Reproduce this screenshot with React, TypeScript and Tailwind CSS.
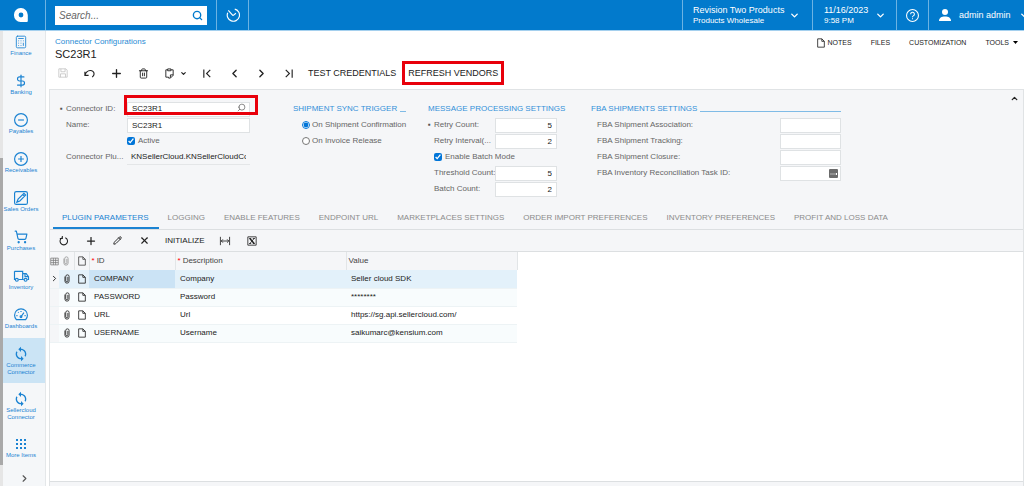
import { useState, ReactNode } from "react";
import { ChevronDown, ChevronLeft, ChevronRight, ChevronUp, Plus, Trash2, Search, Pencil, X, ShoppingCart, DollarSign, Calculator } from "lucide-react";
import { MdSync } from "react-icons/md";

const Svg = (props: { className?: string; width?: number; children: ReactNode }) => (
	<svg viewBox="0 0 24 24" fill="none" stroke="currentColor" strokeWidth={props.width ?? 2} className={props.className} aria-hidden="true">
		{props.children}
	</svg>
);

const Logo = () => (
	<svg viewBox="0 0 14 14" className="size-[14px]" aria-hidden="true">
		<path fill="#fff" fillRule="evenodd" d="M6.500 0A6.500 6.500 0 0 0 0 6.500V7.500A6.500 6.500 0 0 0 6.500 14H12.800Q13.800 14 13.800 13V7A7 7 0 0 0 6.500 0ZM7 4.600A2.400 2.400 0 1 1 7 9.400A2.400 2.400 0 0 1 7 4.600Z" />
	</svg>
);

const PageIcon = ({ className }: { className?: string }) => (
	<Svg className={className}>
		<path d="M4 2h10l6 6v14H4zM14 2v6h6" />
	</Svg>
);

const ClipIcon = ({ className }: { className?: string }) => (
	<Svg className={className}>
		<path d="M7 6v11a5 5 0 0 0 10 0V6a4 4 0 0 0-8 0v10a2.500 2.500 0 0 0 5 0V7" />
	</Svg>
);

const icon = "size-[14px]";

const menu = [
	{ label: "Finance", icon: <Calculator className={icon} strokeWidth={1.5} /> },
	{ label: "Banking", icon: <DollarSign className={icon} strokeWidth={2} /> },
	{ label: "Payables", icon: <Svg className={icon}><circle cx="12" cy="12" r="11" /><path d="M7 12h10" /></Svg> },
	{ label: "Receivables", icon: <Svg className={icon}><circle cx="12" cy="12" r="11" /><path d="M7 12h10M12 7v10" /></Svg> },
	{ label: "Sales Orders", icon: <Svg className={icon}><rect x="1" y="1" width="22" height="22" rx="3" /><path d="m5 19 2-5L17 4l3 3L10 17zM15 6l3 3" /></Svg> },
	{ label: "Purchases", icon: <ShoppingCart className={icon} strokeWidth={2} /> },
	{ label: "Inventory", icon: <Svg className="h-[14px] w-[17px]"><path d="M0 4h14v14H7M14 8h6l4 5v5h-2M0 4v14h1M14 18h2M18 8v5h6" /><circle cx="4" cy="18.500" r="2.500" /><circle cx="19" cy="18.500" r="2.500" /></Svg> },
	{ label: "Dashboards", icon: <Svg className={icon}><path d="M4 20a11 11 0 1 1 16 0zM12 15l5-7M4 13h2M18 13h2M7 7l1 1M12 5v2" /><circle cx="12" cy="15" r="1.500" /></Svg> },
	{ label: "Commerce Connector", icon: <MdSync className="-my-px size-4" aria-hidden="true" /> },
	{ label: "Sellercloud Connector", icon: <MdSync className="-my-px size-4" aria-hidden="true" /> },
	{
		label: "More Items",
		icon: (
			<svg viewBox="0 0 14 14" className={icon} fill="currentColor" aria-hidden="true">
				{[2, 6, 10].map((y) => [2, 6, 10].map((x) => <rect key={`${x}-${y}`} x={x} y={y} width="2" height="2" />))}
			</svg>
		),
	},
];

const tabs = ["PLUGIN PARAMETERS", "LOGGING", "ENABLE FEATURES", "ENDPOINT URL", "MARKETPLACES SETTINGS", "ORDER IMPORT PREFERENCES", "INVENTORY PREFERENCES", "PROFIT AND LOSS DATA"];

const rows = [
	{ id: "COMPANY", description: "Company", value: "Seller cloud SDK" },
	{ id: "PASSWORD", description: "Password", value: "********" },
	{ id: "URL", description: "Url", value: "https://sg.api.sellercloud.com/" },
	{ id: "USERNAME", description: "Username", value: "saikumarc@kensium.com" },
];

const Heading = ({ children }: { children: ReactNode }) => (
	<h2 className="flex h-4 items-center gap-[3px] whitespace-nowrap text-[#3390d8]">
		{children}
		<span className="mt-1 h-px flex-1 bg-[#7fbbe6]" />
	</h2>
);

const Field = (props: { id: string; label: string; value?: string; required?: boolean; labelClass: string; inputClass: string; children?: ReactNode }) => (
	<div className="relative flex h-4 items-center">
		<span className="w-[6px] shrink-0 text-[8px] text-[#555]">{props.required && "▪"}</span>
		<label htmlFor={props.id} className={`shrink-0 whitespace-nowrap ${props.labelClass}`}>
			{props.label}
		</label>
		<input id={props.id} defaultValue={props.value} className={`h-[15px] min-w-0 px-1 text-[#222] outline-none ${props.inputClass}`} />
		{props.children}
	</div>
);

const ToolButton = (props: { label: string; className?: string; children: ReactNode }) => (
	<button aria-label={props.label} className={`flex h-full w-[27px] shrink-0 items-center justify-center ${props.className ?? ""}`}>
		{props.children}
	</button>
);

const Header = () => (
	<header className="flex h-[31px] shrink-0 border-b border-[#a5d0ee] bg-[#027acc] text-[9px] leading-[11px] text-white">
		<a href="#home" aria-label="Home" className="flex w-[46px] items-center justify-center border-r border-[#6cb3e3] pr-1">
			<Logo />
		</a>
		<div className="flex w-[171px] items-center border-r border-[#6cb3e3] pl-[9px]">
			<div className="flex h-[19px] w-[152px] items-center bg-white px-1">
				<input aria-label="Search" placeholder="Search..." className="w-full min-w-0 text-[10px] text-[#333] italic outline-none placeholder:text-[#666]" />
				<Search className="size-[11px] shrink-0 -scale-x-100 rotate-y-180 text-[#027acc]" strokeWidth={3} />
			</div>
		</div>
		<button aria-label="Recent" className="flex w-8 items-center justify-center border-r border-[#6cb3e3]">
			<Svg className="size-[14px]">
				<path d="M3 8a10.500 10.500 0 1 0 12-6M12 13 4 4M12 13l5-4" />
			</Svg>
		</button>
		<button className="ml-auto flex w-[131px] items-center justify-between border-x border-[#6cb3e3] pr-3 pl-[10px] text-left">
			<span>
				Revision Two Products
				<span className="block text-[8px] leading-[10px]">Products Wholesale</span>
			</span>
			<ChevronDown className="size-[11px]" strokeWidth={3} />
		</button>
		<button className="flex w-[84px] items-center justify-between border-r border-[#6cb3e3] pr-[10px] pl-[11px] text-left">
			<span>
				11/16/2023
				<span className="block text-[8px] leading-[10px]">9:58 PM</span>
			</span>
			<ChevronDown className="size-[11px]" strokeWidth={3} />
		</button>
		<button aria-label="Help" className="flex w-8 items-center justify-center border-r border-[#6cb3e3]">
			<Svg className="size-[13px]">
				<circle cx="12" cy="12" r="11" />
				<path d="M8.500 9.500a3.500 3.500 0 1 1 5 3.200c-1 .5-1.500 1-1.500 2.300M12 17v2" />
			</Svg>
		</button>
		<button className="flex w-[95px] items-center overflow-hidden pl-[10px]">
			<svg viewBox="0 0 12 12" className="mr-2 size-3 shrink-0" fill="currentColor" aria-hidden="true">
				<circle cx="6" cy="3" r="3" />
				<path d="M0 12c0-3.300 2.500-4.500 6-4.500s6 1.200 6 4.500z" />
			</svg>
			<span className="whitespace-nowrap">admin admin</span>
			<ChevronDown className="ml-2 size-[11px] shrink-0" strokeWidth={3} />
		</button>
	</header>
);

const Sidebar = () => (
	<aside className="flex w-[46px] shrink-0 border-r border-[#e4e7e9] bg-[#f5f7f9]">
		<div className="w-[3px] shrink-0 bg-[#e6e6e6] pt-[127px]">
			<div className="h-[307px] bg-[#a9a9a9]" />
		</div>
		<nav className="flex-1 overflow-hidden text-[#1b83d2]">
			<div className="-mt-[5px]">
				{menu.map((item) => (
					<a
						key={item.label}
						href="#menu"
						className={`flex min-h-[39px] flex-col items-center gap-px pt-[9px] pr-[6px] pb-[7px] text-center text-[6px] leading-[7px] ${item.label === "Commerce Connector" ? "bg-[#cbe4f5]" : ""}`}
					>
						{item.icon}
						<span className="whitespace-pre-line">{item.label.replace(" Connector", "\nConnector")}</span>
					</a>
				))}
			</div>
			<button aria-label="Expand menu" className="flex w-full justify-center pt-[6px] text-[#555]">
				<ChevronRight className="size-[11px]" strokeWidth={2.5} />
			</button>
		</nav>
	</aside>
);

const Toolbar = () => (
	<div className="flex h-6 text-[9px] text-[#222]">
		<ToolButton label="Save" className="text-[#c4c4c4]">
			<Svg className="size-[10px]"><path d="M2 2h17l3 3v17H2zM7 2v7h10V2M6 22v-8h12v8" /></Svg>
		</ToolButton>
		<ToolButton label="Undo">
			<Svg className="size-[11px]" width={2.5}><path d="M2 8v8h8M2 16C6 2 22 3 22 13c0 3-2 5-4 7" /></Svg>
		</ToolButton>
		<ToolButton label="Add"><Plus className="size-[13px]" strokeWidth={2.5} /></ToolButton>
		<ToolButton label="Delete"><Trash2 className="size-[11px]" /></ToolButton>
		<button aria-label="Copy" className="flex w-[37px] items-center justify-center gap-[5px]">
			<Svg className="size-[11px]"><path d="M8 4H4v16h6M8 2h7v4H8zM15 4h5v12l-6 6h-4v-2M20 15h-6v6" /></Svg>
			<ChevronDown className="size-[7px]" strokeWidth={4} />
		</button>
		<ToolButton label="First"><Svg className="size-[11px]" width={2.5}><path d="M4 3v18M18 4l-8 8 8 8" /></Svg></ToolButton>
		<ToolButton label="Previous"><ChevronLeft className="size-[13px]" strokeWidth={2.5} /></ToolButton>
		<ToolButton label="Next"><ChevronRight className="size-[13px]" strokeWidth={2.5} /></ToolButton>
		<ToolButton label="Last"><Svg className="size-[11px]" width={2.5}><path d="M20 3v18M6 4l8 8-8 8" /></Svg></ToolButton>
		<button className="mr-[6px] pl-[6px] whitespace-nowrap">TEST CREDENTIALS</button>
		<button className="border-3 border-[#e8000b] px-[3px] whitespace-nowrap">REFRESH VENDORS</button>
	</div>
);

const box = "border border-[#dfe2e4] bg-white";

const Form = () => (
	<form className="relative flex flex-wrap pt-[11px] pb-2 pl-[10px] text-[#666]">
		<div className="mr-[43px] w-[190px]">
			<Field id="connector" label="Connector ID:" value="SC23R1" required labelClass="w-[61px]" inputClass={`w-[123px] pb-[2px] ${box}`}>
				<button type="button" aria-label="Look up connector" className="absolute top-[2px] right-1">
					<Search className="size-[9px] -scale-x-100" />
				</button>
				<div className="pointer-events-none absolute -top-[6px] -right-2 h-5 w-[134px] border-3 border-[#e8000b]" />
			</Field>
			<Field id="name" label="Name:" value="SC23R1" labelClass="w-[61px]" inputClass={`w-[123px] ${box}`} />
			<label className="flex h-4 items-center gap-[3px] pl-[67px]">
				<input type="checkbox" defaultChecked className="size-[8px] accent-[#0075d8]" />
				Active
			</label>
			<Field id="plugin" label="Connector Plu..." value="KNSellerCloud.KNSellerCloudConnector" labelClass="w-[61px]" inputClass="w-[123px] border-b border-[#e4e6e8]" />
		</div>
		<div className="mr-[22px] w-[113px]">
			<Heading>SHIPMENT SYNC TRIGGER</Heading>
			{["On Shipment Confirmation", "On Invoice Release"].map((name, i) => (
				<label key={name} className="flex h-4 items-center gap-[2px] pl-[9px] whitespace-nowrap">
					<input type="radio" name="trigger" defaultChecked={i === 0} className="size-[8px] accent-[#0075d8]" />
					{name}
				</label>
			))}
		</div>
		<div className="mr-[34px] w-[129px]">
			<Heading>MESSAGE PROCESSING SETTINGS</Heading>
			<Field id="retry" label="Retry Count:" value="5" required labelClass="w-[61px]" inputClass={`w-[62px] text-right ${box}`} />
			<Field id="interval" label="Retry Interval(..." value="2" labelClass="w-[61px]" inputClass={`w-[62px] text-right ${box}`} />
			<label className="flex h-4 items-center gap-[3px] pl-[6px]">
				<input type="checkbox" defaultChecked className="size-[8px] accent-[#0075d8]" />
				Enable Batch Mode
			</label>
			<Field id="threshold" label="Threshold Count:" value="5" labelClass="w-[61px]" inputClass={`w-[62px] text-right ${box}`} />
			<Field id="batch" label="Batch Count:" value="2" labelClass="w-[61px]" inputClass={`w-[62px] text-right ${box}`} />
		</div>
		<div className="w-[250px]">
			<Heading>FBA SHIPMENTS SETTINGS</Heading>
			<Field id="association" label="FBA Shipment Association:" labelClass="w-[183px]" inputClass={`w-[61px] ${box}`} />
			<Field id="tracking" label="FBA Shipment Tracking:" labelClass="w-[183px]" inputClass={`w-[61px] ${box}`} />
			<Field id="closure" label="FBA Shipment Closure:" labelClass="w-[183px]" inputClass={`w-[61px] ${box}`} />
			<Field id="task" label="FBA Inventory Reconciliation Task ID:" labelClass="w-[183px]" inputClass={`w-[61px] ${box}`}>
				<svg viewBox="0 0 9 9" className="absolute right-[3px] size-[9px]" aria-hidden="true">
					<rect width="9" height="9" rx="1" fill="#6b6b6b" />
					<path d="M1.500 5h1M3.500 5h1M5.500 5h1M7.500 4v2" stroke="#fff" strokeWidth="1" />
				</svg>
			</Field>
		</div>
		<button type="button" aria-label="Collapse" className="absolute top-1 right-1 text-[#222]">
			<ChevronUp className="size-[9px]" strokeWidth={3.5} />
		</button>
	</form>
);

const Grid = () => (
	<table className="w-[467px] table-fixed border-collapse text-left text-[#222]">
		<colgroup>
			<col className="w-[9px]" />
			<col className="w-[15px]" />
			<col className="w-[15px]" />
			<col className="w-[86px]" />
			<col className="w-[171px]" />
			<col className="w-[171px]" />
		</colgroup>
		<thead>
			<tr className="h-[18px] bg-[#f5f6f8] text-[#444]">
				<th aria-label="Settings">
					<Svg className="size-[9px] text-[#777]"><path d="M2 3h20v18H2zM2 9h20M2 15h20M9 3v18M15 3v18" /></Svg>
				</th>
				<th aria-label="Files" className="border-r border-[#e2e5e7]"><ClipIcon className="mx-auto size-[10px] text-[#999]" /></th>
				<th aria-label="Notes" className="border-r border-[#e2e5e7]"><PageIcon className="mx-auto size-[10px]" /></th>
				{["ID", "Description", "Value"].map((name) => (
					<th key={name} className="border-r border-[#e2e5e7] pl-[2px] font-medium">
						{name !== "Value" && <span className="mr-[2px] text-[#f00]">*</span>}
						{name}
					</th>
				))}
			</tr>
		</thead>
		<tbody>
			{rows.map((row, i) => (
				<tr key={row.id} className={`h-[18px] border-b border-[#edf3f5] ${i === 0 ? "bg-[#e3f1fa]" : i % 2 ? "bg-[#f8fcfd]" : "bg-white"}`}>
					<td className="bg-[#f5f6f8]">{i === 0 && <ChevronRight className="size-[9px]" strokeWidth={2.5} />}</td>
					<td><ClipIcon className="mx-auto size-[10px]" /></td>
					<td><PageIcon className="mx-auto size-[10px]" /></td>
					<td className={`pl-[5px] ${i === 0 ? "bg-[#cbe3f5]" : ""}`}>{row.id}</td>
					<td className="pl-[5px]">{row.description}</td>
					<td className="pl-[5px]">{row.value}</td>
				</tr>
			))}
		</tbody>
	</table>
);

const App = () => {
	const [tab, setTab] = useState(tabs[0]);

	return (
		<div className="flex min-h-screen flex-col bg-white font-['Liberation_Sans',Arial,sans-serif] text-[8px] leading-[10px]">
			<Header />
			<div className="flex flex-1">
				<Sidebar />
				<main className="flex min-w-0 flex-1 flex-col pl-[3px]">
					<div className="flex justify-between pt-[5px] pl-[6px]">
						<div>
							<a href="#connectors" className="block leading-[11px] text-[#2a8bd4]">Connector Configurations</a>
							<h1 className="text-[11px] leading-[14px] text-[#222]">SC23R1</h1>
						</div>
						<div className="flex h-[13px] items-center gap-[19px] pr-[6px] text-[7px] text-[#222]">
							<button className="flex items-center gap-[2px]">
								<PageIcon className="size-[10px]" />
								NOTES
							</button>
							<button>FILES</button>
							<button>CUSTOMIZATION</button>
							<button className="flex items-center gap-1">
								TOOLS
								<svg viewBox="0 0 5 3" className="h-[3px] w-[5px]" aria-hidden="true"><path d="M0 0h5L2.500 3z" /></svg>
							</button>
						</div>
					</div>
					<Toolbar />
					<section className="mt-1 flex flex-1 flex-col border-x border-t border-[#e0e3e5] bg-[#f5f6f8]">
						<Form />
						<div role="tablist" className="flex h-[25px] border-b border-[#dcdfe1] pl-[3px]">
							{tabs.map((name) => (
								<button
									key={name}
									role="tab"
									aria-selected={tab === name}
									onClick={() => setTab(name)}
									className={`border-b-2 pt-1 pr-[10px] pl-[9px] whitespace-nowrap ${tab === name ? "border-[#1b83d2] text-[#1b83d2]" : "border-transparent text-[#8b8b8b]"}`}
								>
									{name}
								</button>
							))}
						</div>
						<div className="flex h-[22px] border-b border-[#dcdfe1] text-[#222]">
							<ToolButton label="Refresh"><Svg className="size-[10px]" width={2.5}><path d="M15 4a9 9 0 1 1-7 0M8 0v6H2" /></Svg></ToolButton>
							<ToolButton label="Add row"><Plus className="size-[12px]" strokeWidth={2.5} /></ToolButton>
							<ToolButton label="Edit row"><Pencil className="size-[9px]" strokeWidth={2.5} /></ToolButton>
							<ToolButton label="Delete row"><X className="size-[11px]" strokeWidth={2.5} /></ToolButton>
							<button className="mx-[7px]">INITIALIZE</button>
							<ToolButton label="Fit columns"><Svg className="h-[10px] w-[12px]"><path d="M1 2v20M23 2v20M3 12h18M7 8l-4 4 4 4M17 8l4 4-4 4" /></Svg></ToolButton>
							<ToolButton label="Export to Excel"><Svg className="size-[10px]"><path d="M2 2h20v20H2z" /><path strokeWidth={3.5} d="m7 6 10 12" /><path d="M17 6 7 18M5 6h5M14 6h5M5 18h5M14 18h5" /></Svg></ToolButton>
						</div>
						<div className="flex-1 bg-white">
							<Grid />
						</div>
						<div className="h-[5px] border-t border-[#dcdfe1]" />
					</section>
				</main>
			</div>
		</div>
	);
};

export default App;
